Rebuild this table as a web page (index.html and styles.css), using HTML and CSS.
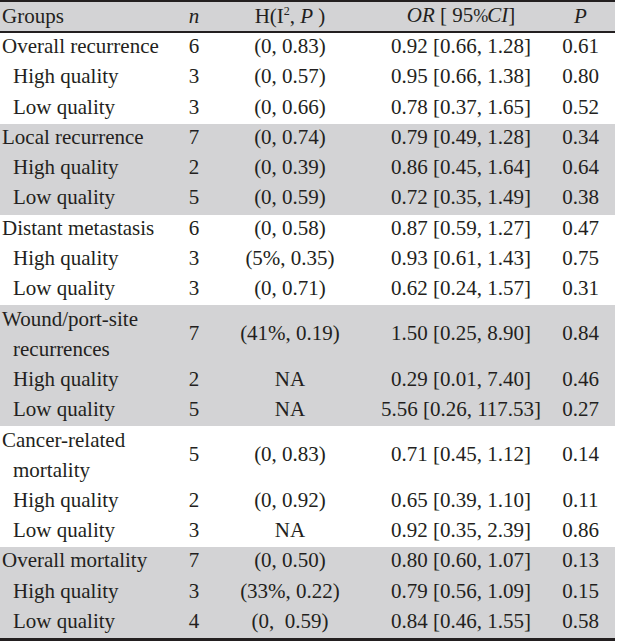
FILE: index.html
```html
<!DOCTYPE html>
<html>
<head>
<meta charset="utf-8">
<link rel="stylesheet" href="styles.css">
</head>
<body>
<table class="meta">
  <colgroup>
    <col class="c-group"><col class="c-n"><col class="c-h"><col class="c-or"><col class="c-p">
  </colgroup>
  <thead>
    <tr>
      <th class="grp">Groups</th>
      <th><i>n</i></th>
      <th>H(I<sup>2</sup>, <i>P</i> )</th>
      <th><i>OR</i> [ 95<span class="pct">%</span><i>CI</i>]</th>
      <th class="pc"><i>P</i></th>
    </tr>
  </thead>
  <tbody>
    <tr><td class="grp">Overall recurrence</td><td>6</td><td>(0, 0.83)</td><td>0.92 [0.66, 1.28]</td><td class="pc">0.61</td></tr>
    <tr><td class="grp sub">High quality</td><td>3</td><td>(0, 0.57)</td><td>0.95 [0.66, 1.38]</td><td class="pc">0.80</td></tr>
    <tr><td class="grp sub">Low quality</td><td>3</td><td>(0, 0.66)</td><td>0.78 [0.37, 1.65]</td><td class="pc">0.52</td></tr>

    <tr class="shade"><td class="grp">Local recurrence</td><td>7</td><td>(0, 0.74)</td><td>0.79 [0.49, 1.28]</td><td class="pc">0.34</td></tr>
    <tr class="shade"><td class="grp sub">High quality</td><td>2</td><td>(0, 0.39)</td><td>0.86 [0.45, 1.64]</td><td class="pc">0.64</td></tr>
    <tr class="shade"><td class="grp sub">Low quality</td><td>5</td><td>(0, 0.59)</td><td>0.72 [0.35, 1.49]</td><td class="pc">0.38</td></tr>

    <tr><td class="grp">Distant metastasis</td><td>6</td><td>(0, 0.58)</td><td>0.87 [0.59, 1.27]</td><td class="pc">0.47</td></tr>
    <tr><td class="grp sub">High quality</td><td>3</td><td>(5%, 0.35)</td><td>0.93 [0.61, 1.43]</td><td class="pc">0.75</td></tr>
    <tr><td class="grp sub">Low quality</td><td>3</td><td>(0, 0.71)</td><td>0.62 [0.24, 1.57]</td><td class="pc">0.31</td></tr>

    <tr class="shade"><td class="grp two">Wound/port-site<br>recurrences</td><td>7</td><td>(41%, 0.19)</td><td>1.50 [0.25, 8.90]</td><td class="pc">0.84</td></tr>
    <tr class="shade"><td class="grp sub">High quality</td><td>2</td><td>NA</td><td>0.29 [0.01, 7.40]</td><td class="pc">0.46</td></tr>
    <tr class="shade"><td class="grp sub">Low quality</td><td>5</td><td>NA</td><td>5.56 [0.26, 117.53]</td><td class="pc">0.27</td></tr>

    <tr><td class="grp two">Cancer-related<br>mortality</td><td>5</td><td>(0, 0.83)</td><td>0.71 [0.45, 1.12]</td><td class="pc">0.14</td></tr>
    <tr><td class="grp sub">High quality</td><td>2</td><td>(0, 0.92)</td><td>0.65 [0.39, 1.10]</td><td class="pc">0.11</td></tr>
    <tr><td class="grp sub">Low quality</td><td>3</td><td>NA</td><td>0.92 [0.35, 2.39]</td><td class="pc">0.86</td></tr>

    <tr class="shade"><td class="grp">Overall mortality</td><td>7</td><td>(0, 0.50)</td><td>0.80 [0.60, 1.07]</td><td class="pc">0.13</td></tr>
    <tr class="shade"><td class="grp sub">High quality</td><td>3</td><td>(33%, 0.22)</td><td>0.79 [0.56, 1.09]</td><td class="pc">0.15</td></tr>
    <tr class="shade"><td class="grp sub">Low quality</td><td>4</td><td>(0,&nbsp; 0.59)</td><td>0.84 [0.46, 1.55]</td><td class="pc">0.58</td></tr>
  </tbody>
</table>
</body>
</html>
```

FILE: styles.css
```css
html, body {
  margin: 0;
  padding: 0;
  background: #ffffff;
}

.meta {
  width: 615px;
  table-layout: fixed;
  border-collapse: collapse;
  font-family: "Liberation Serif", "Times New Roman", serif;
  font-size: 21px;
  color: #231f20;
  border-top: 2px solid #231f20;
  border-bottom: 3px solid #231f20;
}

.c-group { width: 176px; }
.c-n { width: 36px; }
.c-h { width: 156px; }
.c-or { width: 186px; }
.c-p { width: 61px; }

.meta th,
.meta td {
  padding: 0 0 3px 0;
  text-align: center;
  vertical-align: middle;
  font-weight: normal;
  line-height: 27.25px;
  white-space: nowrap;
}

.meta thead tr {
  background: #d3d3d5;
}

.meta thead th {
  line-height: 26px;
  padding-bottom: 2px;
  border-bottom: 2px solid #231f20;
}

.meta .grp {
  text-align: left;
  padding-left: 13px;
  text-indent: -11px;
}

.meta .grp.sub {
  text-indent: 0;
}

.meta .grp.two {
  line-height: 29.5px;
  padding-bottom: 1.5px;
}

.meta .pc {
  padding-right: 8px;
}

.shade {
  background: #d3d3d5;
}

sup {
  font-size: 12px;
  line-height: 0;
  vertical-align: 8px;
}

.pct {
  font-size: 18px;
  letter-spacing: -1px;
}
```
